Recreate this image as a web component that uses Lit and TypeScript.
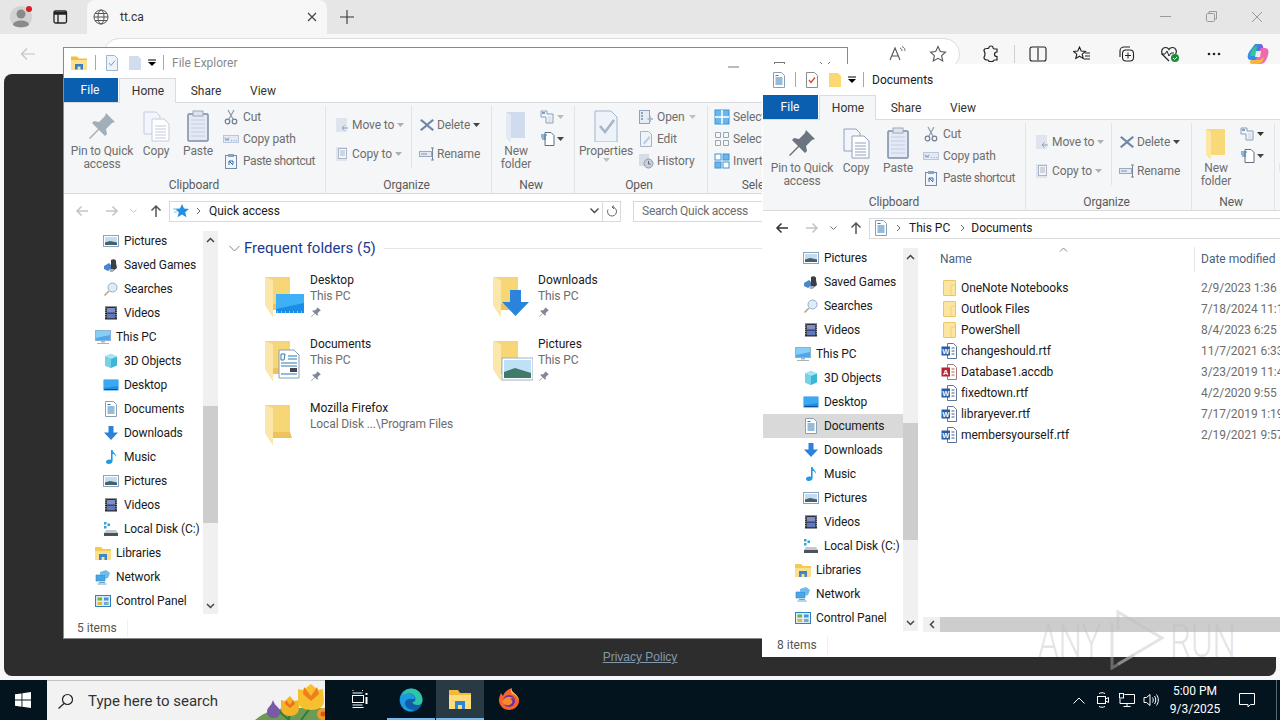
import { LitElement, html, css, svg, nothing } from 'lit';
import { customElement } from 'lit/decorators.js';

// shared icon art, all on a 16 unit box unless the call says otherwise
const art: Record<string, any> = {
	pictures: svg`<rect x=".5" y="2.5" width="15" height="11" fill="#fff" stroke="#8aa3bf"/><rect x="2" y="4" width="12" height="8" fill="#c5dcef"/><path d="M2 9.5l5-1.6 7 1.6V12H2z" fill="#46616c"/>`,
	games: svg`<path d="M1 9l5-3 2 2v4l-3 2-4-2z" fill="#4a86c8"/><path d="M8 3c3-2 6 0 5 3l1 5-4 3-2-2z" fill="#3a3f46"/><path d="M6 12h5l-1 3H7z" fill="#a9b0b8"/>`,
	search: svg`<circle cx="9.5" cy="6.5" r="4.5" fill="#dcecf8" stroke="#8fb0c8"/><path d="M6 10l-4.5 4.5" stroke="#b9a58a" stroke-width="1.6"/>`,
	videos: svg`<rect x="2" y="1.5" width="12" height="13" fill="#2c2c34"/><rect x="4" y="3" width="8" height="4.6" fill="#7d8fc9"/><rect x="4" y="8.6" width="8" height="4.6" fill="#5f78c0"/><path d="M2.8 2.5v11M13.2 2.5v11" stroke="#e8e8e8" stroke-dasharray="1 1.2"/>`,
	pc: svg`<rect x=".5" y="1.5" width="15" height="10" fill="#4fa8ee" stroke="#8cb4d2"/><path d="M1 2h14v4L1 9z" fill="#86cdf8"/><path d="M6 12h4v1.500H6z" fill="#a8b4bd"/><path d="M2 14.500h12" stroke="#a8b4bd"/>`,
	cube: svg`<path d="M8 1l6 2.500v9L8 15l-6-2.500v-9z" fill="#3db7d6"/><path d="M8 1l6 2.500L8 6 2 3.500z" fill="#a6e6f2"/><path d="M8 6v9l-6-2.500v-9z" fill="#78d2e6"/>`,
	desktop: svg`<rect x=".5" y="2.500" width="15" height="11" rx=".5" fill="#1b8fe6"/><path d="M1 3h14v6L1 11z" fill="#3aa9f2"/><path d="M1.500 12.500h13" stroke="#0c4f8c"/>`,
	doc: svg`<path d="M2.500 .5h8l3 3v12h-11z" fill="#fff" stroke="#8a9fb3"/><path d="M4.500 3.500h3M4.500 6h7M4.500 8h7M4.500 10h7M4.500 12h7" stroke="#2c78b8"/>`,
	down: svg`<path d="M5.500 1h5v6.500H15L8 15 1 7.500h4.500z" fill="#2c82d8"/>`,
	music: svg`<path d="M8 1h1.600c.2 3 4 3.500 3.400 7-.5-2-2-3-3.400-3.200V12c0 2-2 3-4 3s-3-1.500-2.500-2.700C3.600 10.800 6 10 8 10.700z" fill="#1d9ce5"/>`,
	disk: svg`<path d="M1 1h2.500v2.500H1zM4.500 2.500H7V5H4.500zM1 5h2.500v2.500H1z" fill="#2aa7e0"/><path d="M3 9h10l2 3v3H1v-3z" fill="#c3c8cc"/><rect x="1" y="12" width="14" height="3" fill="#4b5258"/>`,
	libs: svg`<path d="M0 2h6l2 2h8v11H0z" fill="#f6c94f"/><path d="M0 6h16v9H0z" fill="#fbe08d"/><path d="M4 9h8v6H9.500v-3h-3v3H4z" fill="#3a86cf"/>`,
	network: svg`<path d="M1 6h9v6H1z" fill="#4aa7e6" stroke="#2f84c4" stroke-width=".6"/><path d="M5 3l6-2 4 3-2 5-3 1V6H5z" fill="#6dbce9"/><path d="M4 13.500h6M2.500 15h9" stroke="#6aa5cc"/>`,
	panel: svg`<rect x=".5" y="2.500" width="15" height="11" fill="#dbeaf6" stroke="#2e82c0"/><rect x="2.500" y="4.500" width="4.500" height="3" fill="#6cb446"/><rect x="9" y="4.500" width="4.500" height="3" fill="#3f97d8"/><rect x="2.500" y="9" width="4.500" height="3" fill="#e5b83c"/><rect x="9" y="9" width="4.500" height="3" fill="#7da7c5"/>`,
	cut: svg`<path d="M5 1l5 9M11 1L6 10" stroke="#8d99ab" stroke-width="1.200" fill="none"/><circle cx="4.500" cy="12.500" r="2.300" fill="none" stroke="#6d7e96" stroke-width="1.200"/><circle cx="11.500" cy="12.500" r="2.300" fill="none" stroke="#6d7e96" stroke-width="1.200"/>`,
	copypath: svg`<rect x=".5" y="4.500" width="15" height="7" fill="#e3eaf6" stroke="#b9c7de"/><path d="M2 6.500l1 3 1-2 1 2 1-3M8 9.500h1M10.500 9.500h1M13 9.500h1" stroke="#7f93b3" fill="none" stroke-width=".8"/>`,
	pasteshort: svg`<rect x="2.500" y="2.500" width="11" height="13" fill="#f3f5fa" stroke="#6f8cad"/><rect x="5" y="1" width="6" height="3" fill="#8ba2bd"/><path d="M6 12V8h4v3M6 8l4 4" stroke="#2f6fa8" fill="none"/>`,
	moveto: svg`<rect x="2" y="1" width="11" height="14" fill="#dfe4ee"/><path d="M14 11H8M10.500 8.500L8 11l2.500 2.500" stroke="#8fa2bc" fill="none"/>`,
	copyto: svg`<rect x="2" y="1" width="11" height="14" fill="#dfe4ee"/><rect x="4.500" y="2.500" width="8" height="10" fill="#f3f5f9" stroke="#a9b6c8"/><path d="M6 5h5M6 7h5M6 9h5" stroke="#a9b6c8"/>`,
	del: svg`<path d="M2.500 2l5.500 4.500L13.500 2 15 3.500 9.500 8 15 12.500 13.500 14 8 9.500 2.500 14 1 12.500 6.500 8 1 3.500z" fill="#6f86a6"/>`,
	rename: svg`<rect x=".5" y="5.500" width="12" height="5" fill="#e4e9f1" stroke="#9aa9bb"/><path d="M2 8h6" stroke="#8292a6"/><path d="M12 2h3M13.500 2v12M12 14h3" stroke="#76879b" fill="none"/>`,
	newitem: svg`<path d="M1 2h6v3h6v9H6V8H1z" fill="#f1f4f8" stroke="#8da0b6"/><rect x="2" y="3" width="3" height="2" fill="#7f9fc4"/><rect x="8" y="7" width="3.500" height="6" fill="#dbe4ef"/>`,
	newdoc: svg`<path d="M5 1.500h6l3 3v10H5z" fill="#fff" stroke="#5f6e80"/><path d="M1 4h6M1 6h5M2 8h4" stroke="#2a72b6" stroke-width="1"/>`,
	opensm: svg`<rect x="1.500" y="1.500" width="10" height="13" fill="#e7ecf4" stroke="#8fa2bc"/><path d="M3 4h2M3 7h2M3 10h2" stroke="#6d8db5" stroke-width="1.500"/><path d="M12 7v6M9.500 10H15" stroke="#9ab2cf" stroke-width="1.500"/>`,
	edit: svg`<path d="M2.500 .5h8l3 3v12h-11z" fill="#f0f3f8" stroke="#a4b4c8"/><path d="M5 12l6-7 1.500 1.500-6 7z" fill="#b9cde4"/>`,
	history: svg`<rect x="1" y="1" width="10" height="12" fill="#d7dde6"/><circle cx="10.500" cy="10.500" r="4.500" fill="#c8ced8" stroke="#8f9bab"/><path d="M10.500 8v3h2" stroke="#5e6b7c" fill="none"/>`,
	selall: svg`<rect x="1" y="1" width="14" height="14" fill="#67b7ee" stroke="#3c93d6"/><path d="M8 1v14M1 8h14" stroke="#fff" stroke-width="1.500"/>`,
	selnone: svg`<path d="M1.500 1.500h5v5h-5zM9.500 1.500h5v5h-5zM1.500 9.500h5v5h-5zM9.500 9.500h5v5h-5z" fill="none" stroke="#9aa5b3"/>`,
	selinv: svg`<rect x="1" y="1" width="6" height="6" fill="#fff" stroke="#3c93d6"/><rect x="9" y="1" width="6" height="6" fill="#67b7ee" stroke="#3c93d6"/><rect x="1" y="9" width="6" height="6" fill="#67b7ee" stroke="#3c93d6"/><rect x="9" y="9" width="6" height="6" fill="#fff" stroke="#3c93d6"/>`,
	star: svg`<path d="M9 1l2 4.600 5 .4-3.800 3.300 1.200 5L9 11.500 4.600 14.300l1.200-5L2 6l5-.4z" fill="#1f8fe6"/><path d="M0 6h5M1 9h3" stroke="#7cc3f2"/>`,
	qafolder: svg`<path d="M0 1.500h6l2 2h8v11H0z" fill="#f1bf3c"/><path d="M0 5h16v9.500H0z" fill="#fbe08d"/><path d="M4 9h8v5.500H9.500v-3h-3v3H4z" fill="#3a7fc4"/>`,
	qacheck: svg`<path d="M2.500 .5h8l3 3v12h-11z" fill="#eef3fa" stroke="#9db5d2"/><path d="M5 8l2 2.500 4-5" stroke="#7f9fc4" fill="none"/>`,
	qablank: svg`<path d="M2 1h9l3 3v11H2z" fill="#d3dcee"/>`,
	qacheckred: svg`<path d="M2.500 .5h8l3 3v12h-11z" fill="#fff" stroke="#8c8c8c"/><path d="M5 8l2 2.500 4-5" stroke="#d2452c" fill="none" stroke-width="1.300"/>`,
	qafolderpale: svg`<path d="M2 1h9l3 3v11H2z" fill="#fbd872"/>`,
	smallfolder: svg`<rect x="2.500" y=".5" width="12" height="15" rx=".5" fill="#fbe59f" stroke="#e9c666"/><path d="M10 15V5h4" fill="none" stroke="#f2d27b"/>`,
	word: svg`<path d="M6.500 .5h6l3 3v12h-9z" fill="#fff" stroke="#5b7596"/><path d="M10.500 5h3M10.500 8h3M10.500 11h3" stroke="#3c5f8c"/><rect x=".5" y="3.500" width="8.500" height="9" fill="#2a5da8"/><text x="4.700" y="11" font-size="7.500" font-family="Liberation Sans" font-weight="700" fill="#fff" text-anchor="middle">W</text>`,
	access: svg`<path d="M6.500 .5h6l3 3v12h-9z" fill="#fff" stroke="#a77a7a"/><path d="M10.500 5h3M10.500 8h3M10.500 11h3" stroke="#b75a5a"/><rect x=".5" y="3.500" width="8.500" height="9" fill="#b72533"/><text x="4.700" y="11" font-size="7.500" font-family="Liberation Sans" font-weight="700" fill="#fff" text-anchor="middle">A</text>`,
};

const icon = (name: string, size = 16) =>
	html`<svg class="ico" width=${size} height=${size} viewBox="0 0 16 16">${art[name]}</svg>`;

const caret = (color = '#444') =>
	html`<svg class="caret" width="7" height="4" viewBox="0 0 7 4"><path d="M0 0h7L3.500 4z" fill=${color}/></svg>`;

const pinMini = html`<svg width="12" height="12" viewBox="0 0 32 32"><path d="M20 3l9 9-3 1-6 6 1 5-2 2-6-6-9 9-1-1 9-9-6-6 2-2 5 1 6-6z" fill="#7f8894"/></svg>`;

const bigFolder = (overlay: any = nothing) => html`
	<svg width="40" height="40" viewBox="0 0 40 40">
		<path d="M0 0H25V33H8V40L0 28z" fill="#f4d47c"/>
		<path d="M8 3H25V33H8z" fill="#f6d675"/>
		<path d="M0 0L8 3V40L0 28z" fill="#fbe7a9"/>
		<path d="M8 33H27L25 27H8z" fill="#eec25c"/>
		${overlay}
	</svg>`;

const deskOverlay = svg`<rect x="11" y="17" width="28" height="19" fill="#1a8de8"/><path d="M11 17h28v9L11 32z" fill="#3eb0f6"/><path d="M12 35h26" stroke="#eaf5ff" stroke-dasharray="1 3"/>`;
const docOverlay = svg`<path d="M14 9h15l5 5v23H14z" fill="#fff" stroke="#8a9fb3"/><path d="M16 13h4l-1 6h-3zM23 15h9M23 18h9M16 22h16M16 25h16M16 33h16" stroke="#2c78b8" fill="none"/><rect x="25" y="27" width="7" height="4" fill="#445"/>`;
const dlOverlay = svg`<path d="M17 13h11v12h8L22.500 39 9 25h8z" fill="#2b84dc"/>`;
const picOverlay = svg`<rect x="9" y="17" width="31" height="22" fill="#fff" stroke="#9fb0c2"/><rect x="11" y="19" width="27" height="18" fill="#bfe1f7"/><path d="M11 31l11-4 16 5v5H11z" fill="#3f7a6a"/>`;

const navRows: [string, string, number][] = [
	['Pictures', 'pictures', 2], ['Saved Games', 'games', 2], ['Searches', 'search', 2], ['Videos', 'videos', 2],
	['This PC', 'pc', 1], ['3D Objects', 'cube', 2], ['Desktop', 'desktop', 2], ['Documents', 'doc', 2],
	['Downloads', 'down', 2], ['Music', 'music', 2], ['Pictures', 'pictures', 2], ['Videos', 'videos', 2],
	['Local Disk (C:)', 'disk', 2], ['Libraries', 'libs', 1], ['Network', 'network', 1], ['Control Panel', 'panel', 1],
];

const tiles = [
	['Desktop', 'This PC', deskOverlay, true],
	['Downloads', 'This PC', dlOverlay, true],
	['Documents', 'This PC', docOverlay, true],
	['Pictures', 'This PC', picOverlay, true],
	['Mozilla Firefox', 'Local Disk ...\\Program Files', nothing, false],
];

const files = [
	['OneNote Notebooks', '2/9/2023 1:36 PM', 'smallfolder'],
	['Outlook Files', '7/18/2024 11:16 AM', 'smallfolder'],
	['PowerShell', '8/4/2023 6:25 PM', 'smallfolder'],
	['changeshould.rtf', '11/7/2021 6:33 PM', 'word'],
	['Database1.accdb', '3/23/2019 11:47 AM', 'access'],
	['fixedtown.rtf', '4/2/2020 9:55 PM', 'word'],
	['libraryever.rtf', '7/17/2019 1:19 PM', 'word'],
	['membersyourself.rtf', '2/19/2021 9:57 PM', 'word'],
];

@customElement('ex-window')
export class ExWindow extends LitElement {
	static properties = { variant: { type: String } };
	declare variant: string;

	constructor() {
		super();
		this.variant = 'quick';
	}

	static styles = css`
		:host {
			display: flex;
			flex-direction: column;
			background: #fff;
			font: 12px Roboto, sans-serif;
			color: #1a1a1a;
		}
		svg { display: block; flex: none; }
		.title { display: flex; align-items: center; height: 31px; padding-left: 8px; flex: none; }
		.title .sep { width: 1px; height: 15px; background: #a8a8a8; margin: 0 8px 0 8px; }
		.title .qa { margin-right: 7px; }
		.title .dd { margin: 0 7px 0 5px; }
		.title .name { color: #1a1a1a; }
		.inactive .title .name { color: #8a8a8a; }
		.title .ctl { margin-left: auto; display: flex; }
		.title .ctl svg { width: 46px; height: 14px; }

		.tabs { display: flex; height: 24px; flex: none; border-bottom: 1px solid #dadbdc; }
		.tab { width: 56px; display: flex; align-items: center; justify-content: center; margin-bottom: -1px; color: #333; }
		.tab.file { width: 55px; padding-right: 1px; box-sizing: border-box; margin-bottom: 0; background: #0a5fb0; color: #fff; }
		.tab.home { width: 57px; margin-left: 1px; padding-left: 1px; background: #f5f6f7; border: 1px solid #dadbdc; border-bottom: 0; box-sizing: border-box; }
		.tab.share { margin-left: 2px; }
		.tab.view { margin-left: 1px; }

		.ribbon { display: flex; height: 91px; flex: none; background: #f5f6f7; border-bottom: 1px solid #dadbdc; box-sizing: border-box; color: #6e6e6e; letter-spacing: -.1px; }
		.group { display: flex; flex-direction: column; flex: none; position: relative; border-right: 1px solid #e3e4e6; margin-top: 3px; }
		.group-body { flex: 1; display: flex; }
		.group-label { text-align: center; height: 16px; line-height: 16px; color: #5a5a5a; }
		.organize .group-label, .new .group-label, .open .group-label { padding-right: 4px; }
		.clipboard { width: 262px; }
		.organize { width: 165px; }
		.new { width: 82px; }
		.open { width: 132px; }
		.select { width: 100px; border: 0; }
		.large { display: flex; flex-direction: column; align-items: center; padding-top: 4px; text-align: center; line-height: 13px; flex: none; white-space: nowrap; }
		.large svg { margin-bottom: 3px; }
		.pinbtn { width: 62px; margin-left: 8px; }
		.copybtn { width: 46px; }
		.pastebtn { width: 38px; }
		.propsbtn { width: 58px; margin-left: 2px; }
		.newbtn { width: 48px; }
		.smalls { display: flex; flex-direction: column; flex: none; }
		.small { display: flex; align-items: center; gap: 4px; height: 22px; white-space: nowrap; }
		.small .tight { letter-spacing: -.45px; }
		.small .caret { margin-left: 1px; }
		.col-clip { margin-left: 6px; }
		.col-open { margin-left: 3px; }
		.col-open .small { gap: 3px; }
		.col-sel { margin-left: 6px; }
		.col-sel .small { gap: 3px; }
		.tall { display: flex; flex-direction: column; padding-top: 4px; flex: none; }
		.tall .small { height: 29px; gap: 2px; }
		.tall.move { margin-left: 8px; width: 77px; border-right: 1px solid #e3e4e6; height: 58px; }
		.tall.act { margin-left: 7px; }
		.tall.act .small { gap: 2px; }
		.newsm { padding-top: 3px; display: flex; flex-direction: column; gap: 6px; }
		.newsm div { display: flex; align-items: center; gap: 1px; }

		.nav { display: flex; align-items: center; height: 34px; flex: none; position: relative; }
		.nav .arrow { flex: none; }
		.nav .a1 { margin-left: 12px; }
		.nav .a2 { margin-left: 16px; }
		.nav .a3 { margin-left: 10.500px; }
		.nav .a4 { margin-left: 12.500px; }
		.addr { margin-left: 6px; height: 21px; width: 434px; flex: none; border: 1px solid #d9d9d9; display: flex; align-items: center; box-sizing: border-box; padding-left: 3px; }
		.addr .chev { margin: 0 8px 0 7px; }
		.addr .tail { margin-left: auto; margin-right: 3px; }
		.refresh { width: 18px; height: 21px; box-sizing: border-box; border: 1px solid #d9d9d9; border-left: 0; display: flex; align-items: center; justify-content: center; flex: none; }
		.searchbox { margin-left: 12px; width: 200px; height: 21px; box-sizing: border-box; border: 1px solid #d9d9d9; flex: none; padding-left: 8px; line-height: 19px; color: #6d6d6d; letter-spacing: -.25px; }
		.docs .addr { width: 600px; }

		.main { flex: 1; display: grid; grid-template-columns: 155px 1fr; min-height: 0; }
		.pane { display: flex; min-height: 0; }
		.tree { width: 140px; padding-top: 1px; flex: none; }
		.row { display: flex; align-items: center; height: 24px; gap: 5px; white-space: nowrap; overflow: hidden; letter-spacing: -.1px; }
		.row.l1 { padding-left: 32px; }
		.row.l2 { padding-left: 40px; }
		.row.sel { background: #d9d9d9; }
		.vbar { width: 15px; margin-top: 3px; margin-bottom: 3px; background: #f0f0f0; display: flex; flex-direction: column; flex: none; }
		.vbar .btn { height: 17px; display: flex; align-items: center; justify-content: center; flex: none; }
		.vbar .track { flex: 1; }
		.vbar .thumb { margin-top: 158px; height: 117px; background: #cdcdcd; }

		.content { min-width: 0; overflow: hidden; }
		.head { display: flex; align-items: center; height: 22px; margin-top: 9px; padding-left: 11px; }
		.head h2 { margin: 0 8px 0 4px; font: 15px Roboto, sans-serif; color: #1e3a8f; white-space: nowrap; }
		.head .rule { flex: 1; height: 1px; background: #e5e5e5; }
		.tiles { display: grid; grid-template-columns: 228px 228px; grid-auto-rows: 64px; padding: 13px 0 0 47px; }
		.tile { display: flex; gap: 5px; }
		.tile .pic { margin-top: 5px; }
		.tile .txt div { height: 16px; line-height: 16px; white-space: nowrap; }
		.tile .sub { color: #6d6d6d; letter-spacing: -.12px; }
		.tile .pin { display: flex; align-items: center; }

		.details { display: flex; flex-direction: column; height: 100%; }
		.dhead { display: grid; grid-template-columns: 276px 1fr; height: 25px; margin-top: 2px; color: #4c607a; align-items: center; flex: none; }
		.dhead .n { padding-left: 22px; position: relative; height: 100%; line-height: 25px; }
		.dhead .n svg { position: absolute; left: 141px; top: 0; }
		.dhead .d { padding-left: 6px; border-left: 1px solid #e5e5e5; height: 100%; line-height: 25px; }
		.list { flex: 1; margin-top: 5px; }
		.frow { display: grid; grid-template-columns: 276px 1fr; height: 21px; align-items: center; white-space: nowrap; letter-spacing: -.06px; }
		.frow .n { display: flex; align-items: center; gap: 4px; padding-left: 23px; }
		.frow .d { padding-left: 7px; color: #6d6d6d; }
		.hbar { display: flex; height: 15px; margin: 0 0 2px 5px; background: #cdcdcd; flex: none; }
		.hbar .btn { width: 17px; background: #f0f0f0; display: flex; align-items: center; justify-content: center; }

		.status { height: 22px; flex: none; display: flex; align-items: center; padding-left: 14px; color: #555; box-sizing: border-box; }
		.status span { padding-right: 10px; border-right: 1px solid #f0f0f0; line-height: 18px; }
		.docs .status { height: 23px; padding-bottom: 2px; }
		.wrap { display: flex; flex-direction: column; height: 100%; }
		.docs .chev.second { margin-left: 10px; margin-right: 6px; }
	`;

	arrow(d: string, color: string, cls: string) {
		return html`<svg class="arrow ${cls}" width="14" height="14" viewBox="0 0 14 14"><path d=${d} fill="none" stroke=${color} stroke-width="1.500"/></svg>`;
	}

	renderRibbon(docs: boolean) {
		const pin = docs ? '#6c7480' : '#a3aebb';
		const sheet = docs ? '#8fa2bc' : '#c2cddd';
		return html`<div class="ribbon">
			<div class="group clipboard">
				<div class="group-body">
					<div class="large pinbtn">
						<svg width="32" height="32" viewBox="0 0 32 32"><path d="M20 3l9 9-3 1-6 6 1 5-2 2-6-6-9 9-1-1 9-9-6-6 2-2 5 1 6-6z" fill=${pin}/></svg>
						<span>Pin to Quick<br />access</span>
					</div>
					<div class="large copybtn">
						<svg width="32" height="32" viewBox="0 0 32 32"><path d="M4 2h12l4 4v18H4z" fill="#f2f5fa" stroke=${sheet}/><path d="M12 9h12l5 5v17H12z" fill="#fff" stroke=${sheet}/><path d="M15 16h11M15 19h11M15 22h11M15 25h11M15 28h11" stroke=${sheet}/></svg>
						<span>Copy</span>
					</div>
					<div class="large pastebtn">
						<svg width="32" height="32" viewBox="0 0 32 32"><rect x="6" y="4" width="20" height="27" rx="1" fill="#e4e9f5" stroke="#7a8fa8" stroke-width="1.500"/><rect x="11" y="1" width="10" height="5" fill="#dfe4ec" stroke="#9aa8b8"/><path d="M9 10h14M9 14h14M9 18h14M9 22h14M9 26h14" stroke="#c4cee0"/></svg>
						<span>Paste</span>
					</div>
					<div class="smalls col-clip">
						<div class="small">${icon('cut')}<span>Cut</span></div>
						<div class="small">${icon('copypath')}<span>Copy path</span></div>
						<div class="small">${icon('pasteshort')}<span class="tight">Paste shortcut</span></div>
					</div>
				</div>
				<div class="group-label">Clipboard</div>
			</div>
			<div class="group organize">
				<div class="group-body">
					<div class="tall move">
						<div class="small">${icon('moveto')}<span>Move to</span>${caret('#b0b0b0')}</div>
						<div class="small">${icon('copyto')}<span>Copy to</span>${caret('#b0b0b0')}</div>
					</div>
					<div class="tall act">
						<div class="small">${icon('del')}<span>Delete</span>${caret()}</div>
						<div class="small">${icon('rename')}<span>Rename</span></div>
					</div>
				</div>
				<div class="group-label">Organize</div>
			</div>
			<div class="group new">
				<div class="group-body">
					<div class="large newbtn">
						<svg width="32" height="32" viewBox="0 0 32 32">
							<path d="M6 2H25V28H10V32L6 27z" fill=${docs ? '#f9d877' : '#cfdcee'}/>
							<path d="M6 2l5 3v27l-5-5z" fill=${docs ? '#fde7a4' : '#e3eaf5'}/>
						</svg>
						<span>New<br />folder</span>
					</div>
					<div class="newsm">
						<div>${icon('newitem')}${caret(docs ? '#333' : '#bbb')}</div>
						<div>${icon('newdoc')}${caret()}</div>
					</div>
				</div>
				<div class="group-label">New</div>
			</div>
			<div class="group open">
				<div class="group-body">
					<div class="large propsbtn">
						<svg width="32" height="32" viewBox="0 0 32 32"><path d="M5 1h16l6 6v25H5z" fill="#eef3fa" stroke="#9fb6d3"/><path d="M10 16l5 6 9-12" fill="none" stroke="#a5b5c8" stroke-width="2.500"/></svg>
						<span>Properties</span>
						${caret('#c0c0c0')}
					</div>
					<div class="smalls col-open">
						<div class="small">${icon('opensm')}<span>Open</span>${caret('#c0c0c0')}</div>
						<div class="small">${icon('edit')}<span>Edit</span></div>
						<div class="small">${icon('history')}<span>History</span></div>
					</div>
				</div>
				<div class="group-label">Open</div>
			</div>
			<div class="group select">
				<div class="group-body">
					<div class="smalls col-sel">
						<div class="small">${icon('selall')}<span>Select all</span></div>
						<div class="small">${icon('selnone')}<span>Select none</span></div>
						<div class="small">${icon('selinv')}<span>Invert selection</span></div>
					</div>
				</div>
				<div class="group-label">Select</div>
			</div>
		</div>`;
	}

	render() {
		const docs = this.variant === 'docs';
		const back = 'M13 7H2M6.500 2.500L2 7l4.500 4.500';
		const fwd = 'M1 7h11M7.500 2.500L12 7l-4.500 4.500';
		const up = 'M7 13V2M2.500 6.500L7 2l4.500 4.500';
		return html`<div class="wrap ${docs ? 'docs' : 'inactive'}">
			<div class="title">
				${docs ? icon('doc') : icon('qafolder')}
				<div class="sep"></div>
				<span class="qa">${docs ? icon('qacheckred') : icon('qacheck')}</span>
				<span>${docs ? icon('qafolderpale') : icon('qablank')}</span>
				<svg class="dd" width="8" height="8" viewBox="0 0 8 8"><path d="M0 1h8" stroke="#000"/><path d="M0 3h8L4 7z" fill="#000"/></svg>
				<div class="sep" style="margin-left:0"></div>
				<span class="name">${docs ? 'Documents' : 'File Explorer'}</span>
				${docs ? nothing : html`<div class="ctl">
					<svg viewBox="0 0 46 14"><path d="M18 11h11" stroke="#777"/></svg>
					<svg viewBox="0 0 46 14"><rect x="18.500" y="6.500" width="10" height="10" fill="none" stroke="#777"/></svg>
					<svg viewBox="0 0 46 14"><path d="M18 6l10 10M28 6L18 16" stroke="#777"/></svg>
				</div>`}
			</div>
			<div class="tabs">
				<div class="tab file">File</div>
				<div class="tab home">Home</div>
				<div class="tab share">Share</div>
				<div class="tab view">View</div>
			</div>
			${this.renderRibbon(docs)}
			<div class="nav">
				${this.arrow(back, docs ? '#333' : '#c4c4c4', 'a1')}
				${this.arrow(fwd, '#c4c4c4', 'a2')}
				<svg class="arrow a3" width="7" height="5" viewBox="0 0 7 5"><path d="M.5 .5L3.500 3.500 6.500 .5" fill="none" stroke=${docs ? '#777' : '#c4c4c4'}/></svg>
				${this.arrow(up, '#555', 'a4')}
				<div class="addr">
					${docs ? icon('doc') : icon('star')}
					<svg class="chev" width="5" height="8" viewBox="0 0 5 8"><path d="M1 1l3 3-3 3" fill="none" stroke="#666"/></svg>
					${docs
						? html`<span>This PC</span><svg class="chev second" width="5" height="8" viewBox="0 0 5 8"><path d="M1 1l3 3-3 3" fill="none" stroke="#666"/></svg><span>Documents</span>`
						: html`<span>Quick access</span><svg class="tail" width="9" height="6" viewBox="0 0 9 6"><path d="M.5 .5L4.500 4.500 8.500 .5" fill="none" stroke="#444" stroke-width="1.300"/></svg>`}
				</div>
				${docs ? nothing : html`
					<div class="refresh"><svg width="12" height="12" viewBox="0 0 12 12"><path d="M6 2a4.500 4.500 0 1 1-4 2.500M6 2l2-1.500M6 2l2 2" fill="none" stroke="#666"/></svg></div>
					<div class="searchbox">Search Quick access</div>`}
			</div>
			<div class="main">
				<div class="pane">
					<div class="tree">
						${navRows.map(([label, ic, level], i) => html`
							<div class="row l${level} ${docs && i === 7 ? 'sel' : ''}">${icon(ic)}<span>${label}</span></div>`)}
					</div>
					<div class="vbar">
						<div class="btn"><svg width="9" height="6" viewBox="0 0 9 6"><path d="M1 5l3.500-3.500L8 5" fill="none" stroke="#444" stroke-width="1.500"/></svg></div>
						<div class="track"><div class="thumb"></div></div>
						<div class="btn"><svg width="9" height="6" viewBox="0 0 9 6"><path d="M1 1l3.500 3.500L8 1" fill="none" stroke="#444" stroke-width="1.500"/></svg></div>
					</div>
				</div>
				<div class="content">
					${docs ? this.renderDetails() : this.renderQuick()}
				</div>
			</div>
			<div class="status"><span>${docs ? '8 items' : '5 items'}</span></div>
		</div>`;
	}

	renderQuick() {
		return html`
			<div class="head">
				<svg width="11" height="7" viewBox="0 0 11 7"><path d="M.5 1L5.500 6l5-5" fill="none" stroke="#7a8594"/></svg>
				<h2>Frequent folders (5)</h2>
				<div class="rule"></div>
			</div>
			<div class="tiles">
				${tiles.map(([name, sub, over, pinned]) => html`
					<div class="tile">
						<div class="pic">${bigFolder(over)}</div>
						<div class="txt">
							<div>${name}</div>
							<div class="sub">${sub}</div>
							${pinned ? html`<div class="pin">${pinMini}</div>` : nothing}
						</div>
					</div>`)}
			</div>`;
	}

	renderDetails() {
		return html`<div class="details">
			<div class="dhead">
				<div class="n">Name<svg width="9" height="5" viewBox="0 0 9 5"><path d="M1 4.500L4.500 1 8 4.500" fill="none" stroke="#888"/></svg></div>
				<div class="d">Date modified</div>
			</div>
			<div class="list">
				${files.map(([name, date, ic]) => html`
					<div class="frow">
						<div class="n">${icon(ic)}<span>${name}</span></div>
						<div class="d">${date}</div>
					</div>`)}
			</div>
			<div class="hbar">
				<div class="btn"><svg width="6" height="9" viewBox="0 0 6 9"><path d="M5 1L1.500 4.500 5 8" fill="none" stroke="#444" stroke-width="1.500"/></svg></div>
			</div>
		</div>`;
	}
}

@customElement('app-root')
export class AppRoot extends LitElement {
	static styles = css`
		:host {
			display: block;
			position: relative;
			width: 1280px;
			height: 720px;
			overflow: hidden;
			font: 12px Roboto, sans-serif;
			background: #f7f7f7;
		}
		svg { display: block; flex: none; }
		.shell { display: flex; flex-direction: column; height: 100%; }

		.strip { display: flex; align-items: center; height: 34px; background: #e6e6e6; flex: none; }
		.profile { width: 44px; display: flex; justify-content: center; }
		.tabs-btn { width: 32px; display: flex; justify-content: center; }
		.btab { margin-left: 11px; width: 240px; height: 34px; box-sizing: border-box; background: #f7f7f7; border-radius: 8px 8px 0 0; display: flex; align-items: center; padding: 0 10px 0 6px; font-size: 12px; color: #333; }
		.btab .globe { margin-right: 11px; }
		.btab .x { margin-left: auto; }
		.plus { margin-left: 13px; }
		.winctl { margin-left: auto; display: flex; }
		.winctl div { width: 46px; display: flex; justify-content: center; }

		.bar { display: flex; align-items: flex-start; height: 36px; background: #f7f7f7; flex: none; padding-top: 4px; box-sizing: border-box; }
		.bar .backb { margin: 8px 0 0 20px; }
		.bar .reload { margin: 8px 0 0 29px; }
		.omni { margin-left: 22px; width: 857px; flex: none; height: 32px; box-sizing: border-box; border: 1px solid #dedede; border-radius: 16px; background: #fff; display: flex; align-items: center; justify-content: flex-end; gap: 22px; padding-right: 12px; }
		.tool { width: 44px; height: 32px; display: flex; align-items: center; justify-content: center; flex: none; }
		.tool.first { margin-left: 9px; }
		.vsep { width: 1px; height: 18px; background: #cfcfcf; margin: 7px 1px 0 1px; flex: none; }

		.page { flex: 1; display: flex; padding: 4px; background: #f7f7f7; min-height: 0; }
		.panel { flex: 1; background: #2d2d2d; border-radius: 8px; display: flex; justify-content: center; align-items: flex-end; padding-bottom: 12px; }
		.panel a { font: 12px "Liberation Sans", sans-serif; color: #8299ab; text-decoration: underline; }

		.taskbar { display: flex; align-items: stretch; height: 40px; background: #03141f; flex: none; color: #fff; }
		.start { width: 46px; margin-right: 1px; display: flex; align-items: center; justify-content: center; flex: none; }
		.search { width: 278px; background: #f2f2f2; border-top: 1px solid #c4c4c4; box-sizing: border-box; display: flex; align-items: center; padding-left: 11px; color: #333; font: 15px Roboto, sans-serif; letter-spacing: -.02px; overflow: hidden; flex: none; }
		.search span { margin-left: 14px; white-space: nowrap; }
		.search .flowers { margin-left: auto; }
		.tb { width: 48px; display: flex; align-items: center; justify-content: center; flex: none; box-sizing: border-box; border-bottom: 2px solid transparent; }
		.tb.view { margin-left: 11px; }
		.tb.edge { margin-left: 3px; border-bottom-color: #76b9ed; margin-right: 1px; }
		.tb.edge svg { margin-top: 2px; }
		.tb.files { background: #2a3a45; border-bottom-color: #76b9ed; margin-right: 1px; }
		.tray { margin-left: auto; display: flex; align-items: center; }
		.tray .ti { width: 24px; display: flex; justify-content: center; }
		.clock { width: 64px; text-align: center; line-height: 18px; }
		.notify { width: 40px; display: flex; justify-content: center; }
		.showd { width: 13px; height: 100%; box-sizing: border-box; }
		.showd::after { content: ''; display: block; width: 1px; height: 100%; margin-left: 9px; background: #5b6770; }

		ex-window { position: absolute; }
		.w1 { left: 63px; top: 47px; width: 785px; height: 592px; outline: 1px solid #8a8a8a; outline-offset: -1px; }
		.w2 { left: 762px; top: 64px; width: 800px; height: 593px; padding-left: 1px; box-sizing: border-box; }

		.mark { position: absolute; left: 1038px; top: 610px; height: 60px; display: flex; align-items: center; font: 300 47px Roboto, sans-serif; color: rgba(190, 190, 190, .42); pointer-events: none; }
		.mark span { display: block; width: 65px; transform: scaleX(.7); transform-origin: left center; white-space: nowrap; }
		.mark svg { margin: 0 5px 0 7px; width: 55px; height: 60px; }
	`;

	render() {
		return html`<div class="shell">
			<div class="strip">
				<div class="profile">
					<svg width="24" height="24" viewBox="0 0 24 24">
						<circle cx="11" cy="12" r="11" fill="#d2d2d2"/>
						<circle cx="11" cy="9" r="4.500" fill="#8a8a8a"/>
						<path d="M3 20c0-6 16-6 16 0-4 3-12 3-16 0z" fill="#8a8a8a"/>
						<circle cx="19" cy="4" r="3" fill="#d6202a"/>
					</svg>
				</div>
				<div class="tabs-btn">
					<svg width="16" height="16" viewBox="0 0 16 16"><rect x="2" y="2" width="12.500" height="12" rx="1.500" fill="none" stroke="#222" stroke-width="1.300"/><path d="M2 5h12.500M6 5v9" stroke="#222" stroke-width="1.300"/><path d="M2 3h12.500v2H2z" fill="#222"/></svg>
				</div>
				<div class="btab">
					<svg class="globe" width="16" height="16" viewBox="0 0 16 16"><circle cx="8" cy="8" r="7" fill="none" stroke="#555"/><ellipse cx="8" cy="8" rx="3" ry="7" fill="none" stroke="#555"/><path d="M1 8h14M2 4.500h12M2 11.500h12" stroke="#555"/></svg>
					<span>tt.ca</span>
					<svg class="x" width="10" height="10" viewBox="0 0 10 10"><path d="M1 1l8 8M9 1l-8 8" stroke="#444" stroke-width="1.200"/></svg>
				</div>
				<svg class="plus" width="14" height="14" viewBox="0 0 14 14"><path d="M7 0v14M0 7h14" stroke="#333" stroke-width="1.100"/></svg>
				<div class="winctl">
					<div><svg width="11" height="11" viewBox="0 0 11 11"><path d="M0 5.500h11" stroke="#9a9a9a"/></svg></div>
					<div><svg width="11" height="11" viewBox="0 0 11 11"><rect x=".5" y="2.500" width="8" height="8" rx="1" fill="none" stroke="#9a9a9a"/><path d="M3 2.500V.5h7.500V8H8.500" fill="none" stroke="#9a9a9a"/></svg></div>
					<div><svg width="12" height="12" viewBox="0 0 12 12"><path d="M1 1l10 10M11 1L1 11" stroke="#9a9a9a"/></svg></div>
				</div>
			</div>
			<div class="bar">
				<svg class="backb" width="16" height="16" viewBox="0 0 16 16"><path d="M15 8H1.500M7 2.500L1.500 8 7 13.500" fill="none" stroke="#c4c4c4" stroke-width="1.200"/></svg>
				<svg class="reload" width="16" height="16" viewBox="0 0 16 16"><path d="M13 8a5.500 5.500 0 1 1-2-4.300" fill="none" stroke="#444" stroke-width="1.200"/></svg>
				<div class="omni">
					<svg width="18" height="18" viewBox="0 0 18 18"><path d="M1 15L6 3l5 12M3 11h6" fill="none" stroke="#555" stroke-width="1.100"/><path d="M11 3c1.500.5 2 1.500 2 3M13 1.500c2 .7 3 2.300 3 4.500" fill="none" stroke="#666"/></svg>
					<svg width="18" height="18" viewBox="0 0 18 18"><path d="M9 1.500l2.300 5 5.200.6-3.900 3.600 1.100 5.300L9 13.300 4.300 16l1.100-5.300L1.500 7.100l5.200-.6z" fill="none" stroke="#555" stroke-width="1.100"/></svg>
				</div>
				<div class="tool first"><svg width="18" height="18" viewBox="0 0 18 18"><path d="M7 2.500c0-2 4-2 4 0 0 1 .3 1.500 1.500 1.500H15v3c-1.500 0-2.500 1-2.500 2.200S13.500 11.500 15 11.500V15h-2.500c-1.200 0-1.500.5-1.500 1.500H7c0-1-.3-1.500-1.500-1.500C3 15 2 14 2 12.500c0-1 1-1.500 1-3.500S2 6.500 2 5.500C2 4 3 3.500 5 3.500c1.500 0 2-.2 2-1z" fill="none" stroke="#222" stroke-width="1.200"/></svg></div>
				<div class="vsep"></div>
				<div class="tool"><svg width="18" height="16" viewBox="0 0 18 16"><path d="M8 1H3a2 2 0 0 0-2 2v10a2 2 0 0 0 2 2h5M10 1h5a2 2 0 0 1 2 2v10a2 2 0 0 1-2 2h-5M9 0v16" fill="none" stroke="#222" stroke-width="1.100"/></svg></div>
				<div class="tool"><svg width="18" height="16" viewBox="0 0 18 16"><path d="M6.500 1l1.700 4 4.300.4-3.300 2.800 1 4.200-3.700-2.200-3.700 2.200 1-4.200L.5 5.400 4.800 5z" fill="none" stroke="#222" stroke-width="1.100"/><path d="M12 7h5M12 10h5M11 13h6" stroke="#222"/></svg></div>
				<div class="tool"><svg width="18" height="18" viewBox="0 0 18 18"><path d="M3 12V6a4 4 0 0 1 4-4h6" fill="none" stroke="#222" stroke-width="1.100"/><rect x="5.500" y="5" width="11" height="11" rx="3.500" fill="none" stroke="#222" stroke-width="1.100"/><path d="M11 7.500v6M8 10.500h6" stroke="#222"/></svg></div>
				<div class="tool"><svg width="20" height="18" viewBox="0 0 20 18"><path d="M9 16L2.500 9.500C.5 7 2 2.500 5.500 2.500c2 0 3 1 3.500 2 .5-1 1.500-2 3.500-2 3.500 0 5 4.500 3 7" fill="none" stroke="#222" stroke-width="1.200"/><path d="M1 9h4l2-3 2 5 2-3h3" fill="none" stroke="#222"/><circle cx="15" cy="13" r="4" fill="#1f8b3a"/><path d="M13 13l1.500 1.500 2.500-2.500" fill="none" stroke="#fff"/></svg></div>
				<div class="tool"><svg width="14" height="4" viewBox="0 0 14 4"><circle cx="2" cy="2" r="1.300" fill="#222"/><circle cx="7" cy="2" r="1.300" fill="#222"/><circle cx="12" cy="2" r="1.300" fill="#222"/></svg></div>
				<div class="tool"><svg width="24" height="24" viewBox="0 0 24 24">
					<path d="M9 2h5c3 0 3 3 4 7l-7 9H5C1 18 1 14 3 10z" fill="#2f8fe8"/>
					<path d="M14 2c3 0 3 3 4 7l-4 1-3-4z" fill="#7a62e2"/>
					<path d="M15 6h4c4 0 4 4 3 7-1 4-3 9-8 9H7l5-8z" fill="#f06ab0"/>
					<path d="M5 18h9l4-3c-1 5-3 7-7 7H7C4 22 3 20 5 18z" fill="#f9b53d"/>
					<path d="M5 10c2-4 4-6 6-6l-2 10H4z" fill="#36c58e"/>
					<path d="M10 9h5l-1 6H9z" fill="#fff" opacity=".85"/>
				</svg></div>
			</div>
			<div class="page">
				<div class="panel"><a href="#">Privacy Policy</a></div>
			</div>
			<div class="taskbar">
				<div class="start">
					<svg width="16" height="16" viewBox="0 0 16 16"><path d="M0 2.300l6.500-.9v6.200H0zM7.400 1.300L16 0v7.600H7.400zM0 8.500h6.500v6.200L0 13.700zM7.400 8.500H16V16l-8.600-1.300z" fill="#fff"/></svg>
				</div>
				<div class="search">
					<svg width="16" height="16" viewBox="0 0 16 16"><circle cx="9.500" cy="6.500" r="5" fill="none" stroke="#222" stroke-width="1.200"/><path d="M6 10.500L.5 15.500" stroke="#222" stroke-width="1.200"/></svg>
					<span>Type here to search</span>
					<svg class="flowers" width="70" height="39" viewBox="0 0 70 39">
						<path d="M0 39c10-9 24-12 36-12h34v12z" fill="#6d9a54"/>
						<path d="M35 28l-1 11M56 26l-10 13M24 30l10 9" stroke="#2f7d3a" stroke-width="2" fill="none"/>
						<path d="M12 31c0-5 4-5 6-12 2 7 7 7 7 12 0 4-3 6-6 6-4 0-7-2-7-6z" fill="#7a5aa6"/>
						<path d="M26 19l4 1 5-5 4 5 5-1v8c0 5-4 8-9 8s-9-3-9-8z" fill="#f5b428"/>
						<path d="M43 8l5 1 8-6 7 6 5-1 1 12c0 6-6 9-13 9s-13-3-13-9z" fill="#f7c02e"/>
						<path d="M49 6l7 9 6-9 2 7-8 7-8-7z" fill="#ee7f1c"/>
						<path d="M31 19l4 5 3-5 2 4-5 4-5-4z" fill="#e8731c"/>
						<circle cx="68" cy="33" r="6" fill="#f19a2c"/><circle cx="68" cy="33" r="2.500" fill="#d8571e"/>
					</svg>
				</div>
				<div class="tb view"><svg width="20" height="20" viewBox="0 0 20 20"><path d="M2.500 4h10M2.500 16h10" stroke="#fff" stroke-width="1"/><rect x="2.500" y="6.500" width="11" height="7" fill="none" stroke="#fff"/><path d="M2.500 1.500h1M12 1.500h1M2.500 18.500h11" stroke="#fff"/><path d="M16.500 4v2M16.500 8v7" stroke="#fff" stroke-width="2"/></svg></div>
				<div class="tb edge"><svg width="24" height="24" viewBox="0 0 24 24">
					<circle cx="12" cy="12" r="11.500" fill="#0f5fa8"/>
					<path d="M1 11C2 4 7 .5 12 .5 18 .5 23.500 5 23.500 12c0 3-2 5-5 5-3.500 0-5-1.500-5-3 1.500 0 3-1 3-3 0-3-3-5.500-6-5.500C6 5.500 2 8 1 11z" fill="#2ec4a6"/>
					<path d="M1 11C2 5 7 .5 12 .5c-5 0-8 3-8 7 2-1.500 4-2 6-2 3 0 6 2.500 6 5.500l-5-.2C8 11 6 13 6 15c0 4 4 7 9 7-1 1-2 1.500-3 1.500C6 23.500 .5 18 1 11z" fill="#1c9be0"/>
				</svg></div>
				<div class="tb files"><svg width="24" height="22" viewBox="0 0 24 22"><path d="M1 2h9l2 3h11v16H1z" fill="#f2b93b"/><path d="M1 7h22v14H1z" fill="#fcdc7b"/><path d="M7 13h10v8h-3v-4h-4v4H7z" fill="#2e86d2"/></svg></div>
				<div class="tb"><svg width="24" height="24" viewBox="0 0 24 24">
					<path d="M4 6l2 3c1-4 5-7 9-8-1 2 0 3 2 5 3 2 5 5 5 8 0 5-5 9-10 9S2 19 2 13c0-2 1-5 2-7z" fill="#f9622b"/>
					<path d="M15 1c-1 2 0 3 2 5 3 2 5 5 5 8-1-3-3-6-6-7-2-1-3-3-1-6z" fill="#ffc53d"/>
					<circle cx="12" cy="14" r="6" fill="#6b2fa8"/>
					<path d="M7 12c3-3 7-3 10 0-1-1-3-1-4 0 2 0 3 2 2 4-2 3-7 3-9 0-1-1 0-3 1-4z" fill="#f58a2c"/>
				</svg></div>
				<div class="tray">
					<div class="ti"><svg width="12" height="7" viewBox="0 0 12 7"><path d="M.5 6.500L6 1l5.500 5.500" fill="none" stroke="#fff"/></svg></div>
					<div class="ti"><svg width="14" height="18" viewBox="0 0 14 18"><rect x="1.500" y="5.500" width="8" height="7" fill="none" stroke="#fff"/><path d="M9.500 8l3-1.500v5L9.500 10M3 2.500c2-1 4-1 6 0M3 15.500c2 1 4 1 6 0" fill="none" stroke="#fff"/></svg></div>
					<div class="ti"><svg width="16" height="15" viewBox="0 0 16 15"><path d="M5.500 1.500h10v9H1V6M8 10.500v3M4.500 13.500h7" fill="none" stroke="#fff"/><rect x=".5" y=".5" width="4" height="4.500" fill="none" stroke="#fff"/></svg></div>
					<div class="ti"><svg width="16" height="14" viewBox="0 0 16 14"><path d="M1 4.500h2.500L7 1.500v11l-3.500-3H1z" fill="none" stroke="#fff"/><path d="M9.500 4.500c1 1.500 1 3.500 0 5M11.500 3c1.700 2.300 1.700 5.700 0 8M13.500 1.500c2.400 3.200 2.400 7.800 0 11" fill="none" stroke="#fff"/></svg></div>
					<div class="clock"><div>5:00 PM</div><div>9/3/2025</div></div>
					<div class="notify"><svg width="16" height="16" viewBox="0 0 16 16"><path d="M.5 1.500h15v11h-4l-2.500 2.500v-2.500H.5z" fill="none" stroke="#fff"/></svg></div>
					<div class="showd"></div>
				</div>
			</div>
		</div>
		<ex-window class="w1" variant="quick"></ex-window>
		<ex-window class="w2" variant="docs"></ex-window>
		<div class="mark">
			<span>ANY</span>
			<svg viewBox="0 0 55 60"><path d="M8 20V2l44 26-44 26" fill="none" stroke="currentColor" stroke-width="3"/><path d="M2 12v46l22-13" fill="none" stroke="currentColor" stroke-width="3"/></svg>
			<span>RUN</span>
		</div>`;
	}
}
